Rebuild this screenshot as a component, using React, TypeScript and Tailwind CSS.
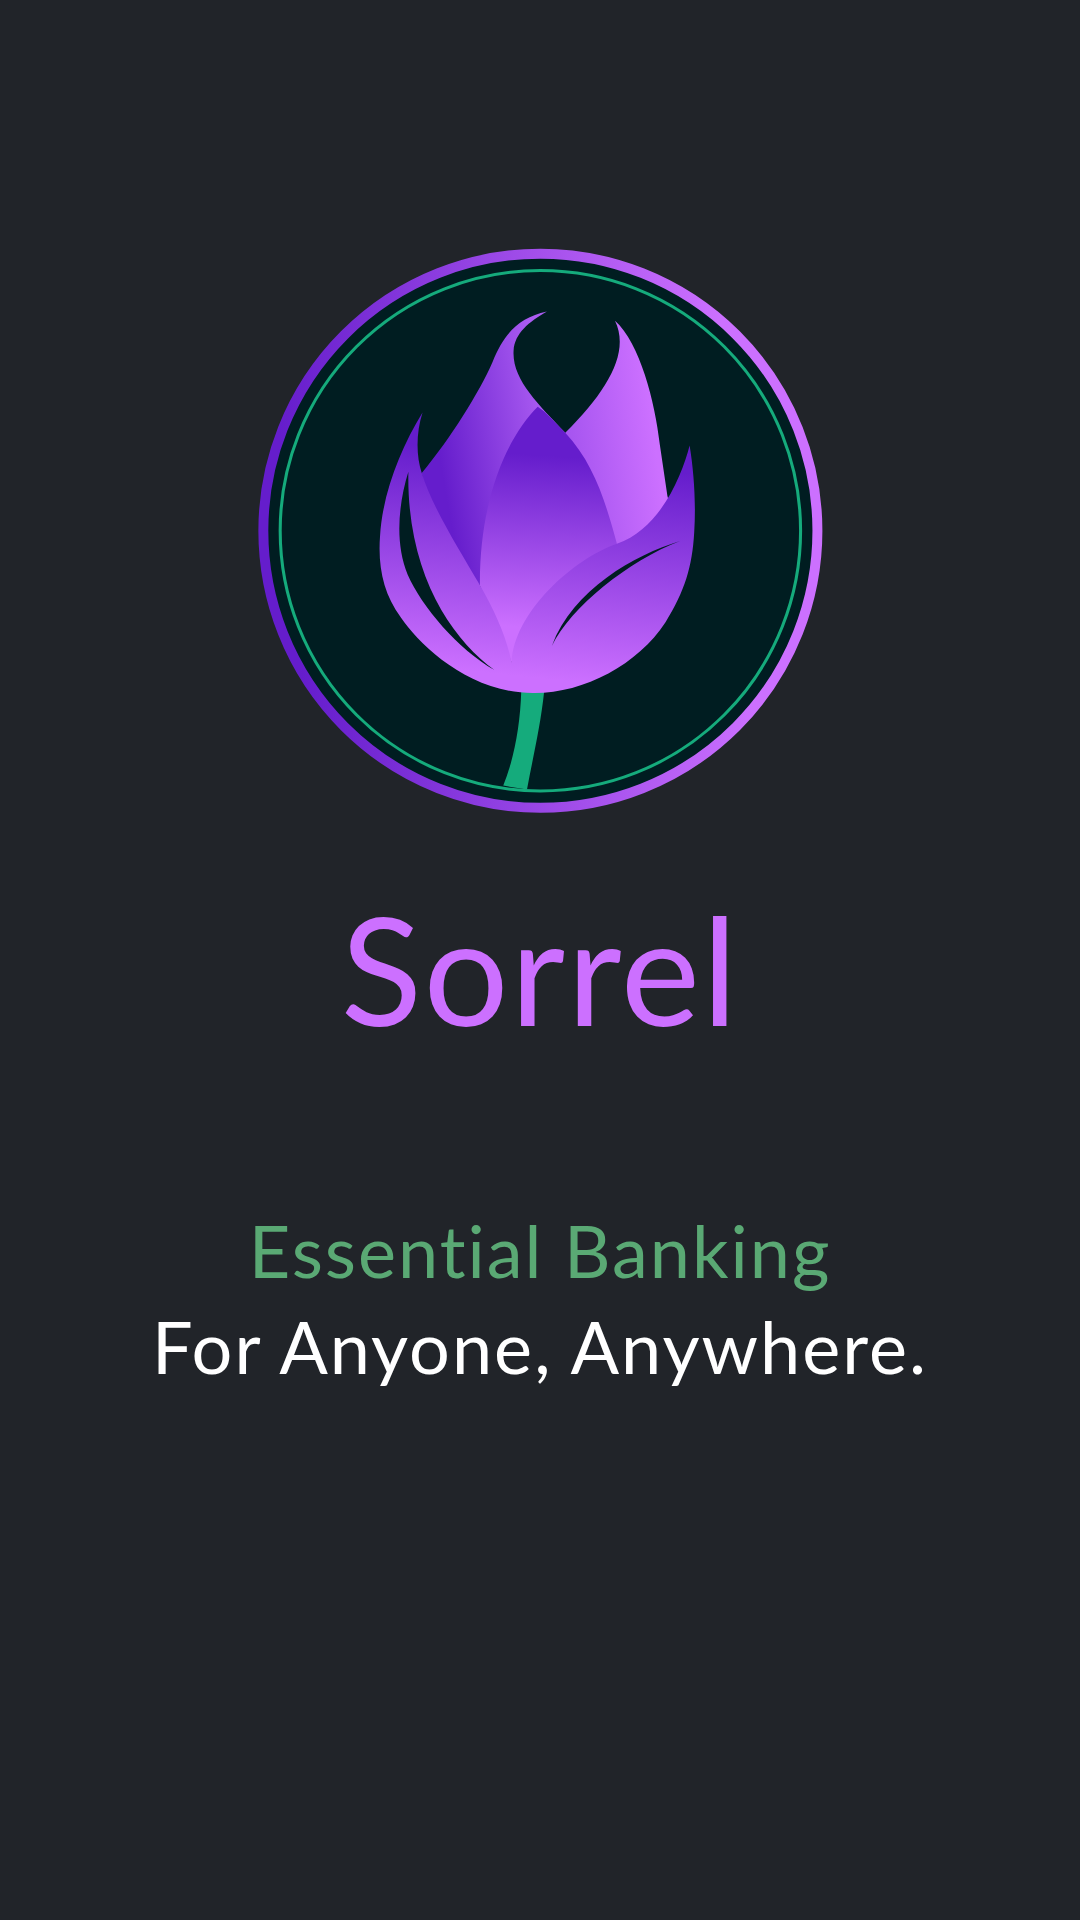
import React from 'react';

function SorrelLogo() {
  return (
    <svg className="w-[600px] h-[600px] block" viewBox="0 0 1568 1568" fill="none">
      <defs>
        <linearGradient id="ring" gradientUnits="userSpaceOnUse" x1="130" y1="830" x2="1300" y2="730">
          <stop offset="0" stopColor="#651dcc" />
          <stop offset="1" stopColor="#cc70ff" />
        </linearGradient>
        <linearGradient id="backLeft" gradientUnits="userSpaceOnUse" x1="540" y1="700" x2="830" y2="650">
          <stop offset="0" stopColor="#651dcc" />
          <stop offset="1" stopColor="#ab5cf2" />
        </linearGradient>
        <linearGradient id="backRight" gradientUnits="userSpaceOnUse" x1="800" y1="640" x2="1090" y2="600">
          <stop offset="0" stopColor="#9a4ceb" />
          <stop offset="1" stopColor="#cc70ff" />
        </linearGradient>
        <linearGradient id="center" gradientUnits="userSpaceOnUse" x1="800" y1="590" x2="770" y2="1040">
          <stop offset="0" stopColor="#651dcc" />
          <stop offset="1" stopColor="#cc70ff" />
        </linearGradient>
        <linearGradient id="bloom" gradientUnits="userSpaceOnUse" x1="830" y1="600" x2="770" y2="1170">
          <stop offset="0" stopColor="#651dcc" />
          <stop offset="1" stopColor="#cc70ff" />
        </linearGradient>
      </defs>
      <circle cx="785" cy="786" r="724" fill="#001d21" stroke="url(#ring)" strokeWidth="26" />
      <circle cx="785" cy="786" r="680" stroke="#15ab7c" strokeWidth="8" />
      <path d="M735 1205C732 1300 715 1385 688 1452L750 1462C765 1380 785 1300 795 1205Z" fill="#15ab7c" />
      {/* back petals */}
      <path
        d="M802 213C730 228 690 270 660 345C625 425 550 545 475 635L500 800L628 930L850 530C780 455 710 390 715 315C718 270 755 240 802 213Z"
        fill="url(#backLeft)"
      />
      <path
        d="M980 237C1020 320 960 420 850 530L800 700L985 900L1140 780L1117 695L1097 560C1085 450 1045 295 980 237Z"
        fill="url(#backRight)"
      />
      <path
        d="M778 462C700 540 625 700 627 930L710 1130L985 820C955 710 925 610 850 530C825 505 800 475 778 462Z"
        fill="url(#center)"
      />
      {/* front leaves */}
      <path
        d="M477 477C420 570 372 690 366 800C360 880 375 950 420 1012C470 1085 600 1212 770 1210C900 1210 1040 1135 1112 1025C1162 945 1182 880 1187 790C1192 710 1186 630 1175 563C1155 640 1100 780 985 820C870 860 715 1000 710 1130C695 1060 665 995 628 930C570 830 500 720 475 635C460 590 460 530 477 477Z"
        fill="url(#bloom)"
      />
      <path
        d="M440 632C413 720 405 820 438 900C475 985 570 1095 665 1150C555 1070 435 900 440 632Z"
        fill="#001d21"
      />
      <path d="M1150 813C1030 850 870 940 815 1087C865 985 1015 865 1150 813Z" fill="#001d21" />
    </svg>
  );
}

function App() {
  return (
    <div className="w-[1080px] h-[1920px] bg-[#212429] flex flex-col items-center pt-[230px] font-['Lato',sans-serif]">
      <SorrelLogo />
      <h1 className="mt-[48px] text-[150px] leading-[180px] font-normal tracking-[2px] text-[#cc70ff]">Sorrel</h1>
      <div className="mt-[144px] text-center text-[72px] leading-[96px] tracking-[2px]">
        <p className="text-[#5aa974]">Essential Banking</p>
        <p className="text-white">For Anyone, Anywhere.</p>
      </div>
    </div>
  );
}

export default App;
